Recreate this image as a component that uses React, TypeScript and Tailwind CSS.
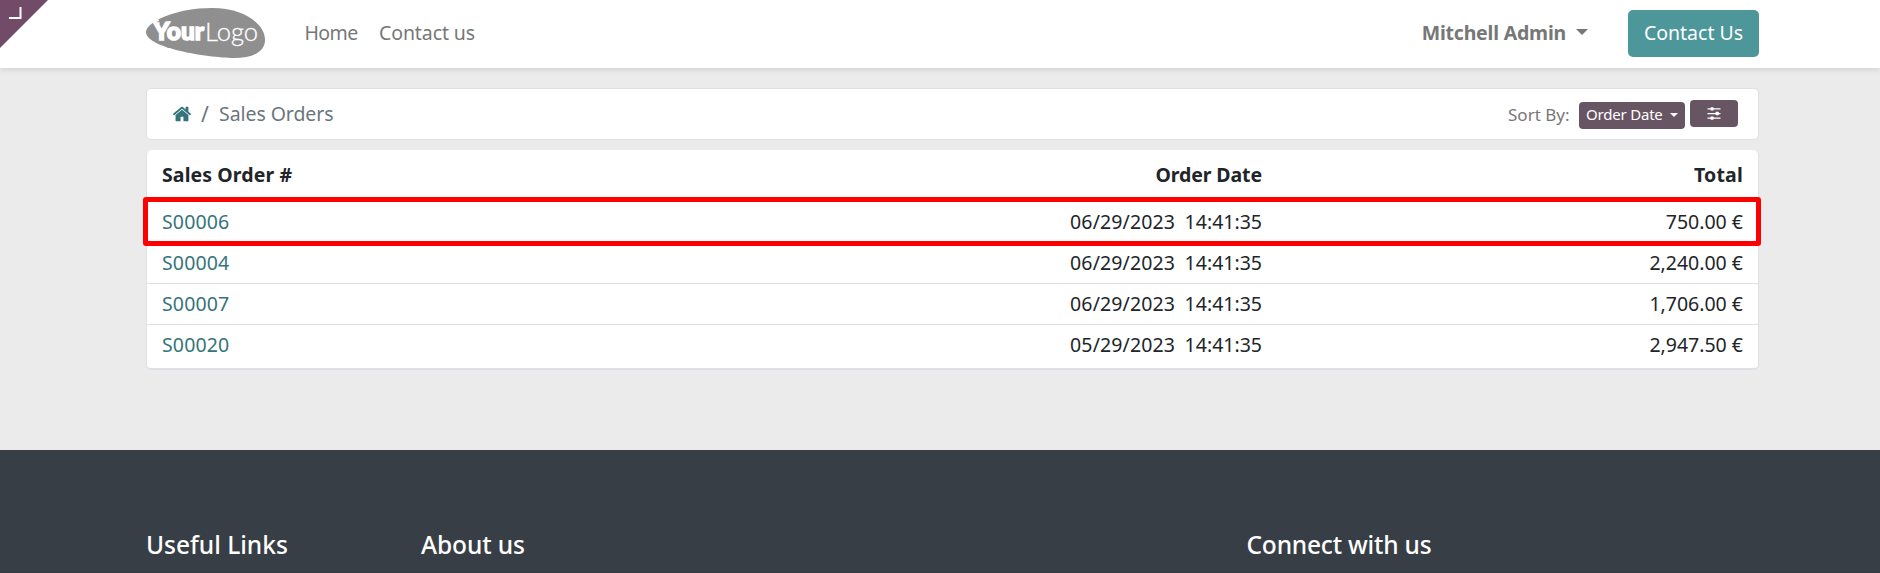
const orders = [
  { id: "S00006", date: "06/29/2023", time: "14:41:35", total: "750.00 €" },
  { id: "S00004", date: "06/29/2023", time: "14:41:35", total: "2,240.00 €" },
  { id: "S00007", date: "06/29/2023", time: "14:41:35", total: "1,706.00 €" },
  { id: "S00020", date: "05/29/2023", time: "14:41:35", total: "2,947.50 €" },
];

function Logo() {
  return (
    <svg width="119" height="50" viewBox="0 0 119 50" className="mt-2 shrink-0" role="img" aria-label="Your Logo">
      <path
        d="M0 24C0 14 30 0 66 0C98 0 119 16 119 32C119 44 106 50 88 50C60 49.500 0 40 0 24Z"
        fill="#8f8f8f"
      />
      <text x="7.500" y="32.300" textLength="50.500" lengthAdjust="spacingAndGlyphs" fill="#fff" stroke="#fff" strokeWidth="1.500" className="font-['Lato',sans-serif] text-[24.5px] font-black">
        Your
      </text>
      <path d="M5 12.700h8M8 15h6" stroke="#fff" strokeWidth="1.200" />
      <text x="59" y="32.800" textLength="53" lengthAdjust="spacingAndGlyphs" fill="#fff" stroke="#fff" strokeWidth="0.300" className="font-['Lato',sans-serif] text-[26px] font-light">
        Logo
      </text>
    </svg>
  );
}

function HomeIcon() {
  return (
    <svg width="20" height="20" viewBox="0 0 1792 1792" fill="currentColor" className="text-[#35747a]">
      <path d="M1472 992v480q0 26-19 45t-45 19h-384v-384h-256v384h-384q-26 0-45-19t-19-45v-480q0-1 .5-3t.5-3l575-474 575 474q1 2 1 6zm223-69l-62 74q-8 9-21 11h-3q-13 0-21-7l-692-577-692 577q-12 8-24 7-13-2-21-11l-62-74q-8-10-7-23.5t11-21.5l719-599q32-26 76-26t76 26l244 204v-195q0-14 9-23t23-9h192q14 0 23 9t9 23v408l219 182q10 8 11 21.500t-7 23.500z" />
    </svg>
  );
}

function SlidersIcon() {
  return (
    <svg width="14" height="13" viewBox="0 0 14 13" fill="currentColor">
      <path d="M0.500 1.300h13v1.300h-13zM0.500 5.900h13v1.300h-13zM0.500 10.500h13v1.300h-13z" />
      <rect x="3.500" y="0.200" width="3.200" height="3.400" rx="0.800" />
      <rect x="8.600" y="4.800" width="3.200" height="3.400" rx="0.800" />
      <rect x="3.500" y="9.400" width="3.200" height="3.400" rx="0.800" />
    </svg>
  );
}

export default function App() {
  return (
    <div className="flex h-[573px] w-full flex-col overflow-hidden bg-[#ebebeb] font-['Noto_Sans','Open_Sans',sans-serif] text-[19.5px] text-[#212529]">
      <header className="relative flex h-[68px] shrink-0 bg-white pl-[146px] shadow-[0_2px_5px_rgba(0,0,0,0.1)]">
        <svg width="48" height="48" viewBox="0 0 48 48" className="absolute top-0 left-0">
          <path d="M0 0H48L0 48Z" fill="#714b67" />
          <path d="M9 17.900H20.500V7" fill="none" stroke="#fff" strokeWidth="2" />
        </svg>
        <div className="flex w-[1613px]">
          <Logo />
          <nav className="flex pl-[39.5px] leading-[66px] text-[#777777]">
            <a className="w-[74.5px] tracking-[-0.6px]">Home</a>
            <a className="tracking-[-0.1px]">Contact us</a>
          </nav>
          <div className="ml-auto flex leading-[66px] text-[#777777]">
            <span className="font-bold tracking-[-0.2px]">Mitchell Admin</span>
            <svg width="12" height="6" viewBox="0 0 12 6" className="mt-[29px] ml-[10px]">
              <path d="M0 0H12L6 6Z" fill="#777777" />
            </svg>
            <button className="mt-[10px] ml-[40px] h-[47px] w-[131px] rounded-[5px] bg-[#4d979b] pb-[1px] text-white leading-[46px]">
              Contact Us
            </button>
          </div>
        </div>
      </header>

      <main className="ml-[146px] w-[1613px] grow">
        <div className="mt-[20px] flex h-[52px] rounded-[5px] border border-[#dee0e5] bg-white pl-[25px] leading-[50px] text-[#6c757d]">
          <div className="pt-[15px]">
            <HomeIcon />
          </div>
          <span className="ml-[9px] w-[18px] text-[21px]">/</span>
          <span className="tracking-[-0.07px]">Sales Orders</span>
          <div className="ml-auto flex pr-[20px]">
            <span className="text-[17px] leading-[51px] text-[#777777]">Sort By:</span>
            <button className="mt-[13px] ml-[9.5px] flex h-[27px] w-[106px] items-center rounded-[4px] bg-[#685563] pb-[2px] pl-[7px] text-[15px] leading-[25px] tracking-[-0.2px] text-white">
              Order Date
              <svg width="8" height="4" viewBox="0 0 8 4" className="mt-[1px] ml-[7px]">
                <path d="M0 0H8L4 4Z" fill="#fff" />
              </svg>
            </button>
            <button className="mt-[11px] ml-[5px] flex h-[27px] w-[48px] items-center justify-center rounded-[4px] bg-[#685563] pb-px text-white">
              <SlidersIcon />
            </button>
          </div>
        </div>

        <div className="relative mt-[10px] h-[220px] rounded-[5px] border-x border-b-2 border-[#dee0e5] bg-white">
          <table className="w-full table-fixed border-separate border-spacing-0">
            <colgroup>
              <col className="w-[500px]" />
              <col className="w-[630px]" />
              <col />
            </colgroup>
            <thead>
              <tr className="h-[52px] text-left align-top leading-[49px]">
                <th className="pl-[15px] font-bold tracking-[0.1px]">Sales Order #</th>
                <th className="pr-[15px] text-right font-bold tracking-[-0.1px]">Order Date</th>
                <th className="pr-[15px] text-right font-bold tracking-[0.2px]">Total</th>
              </tr>
            </thead>
            <tbody className="[&>tr:last-child>td]:border-b-0">
              {orders.map((o) => (
                <tr key={o.id} className="h-[41px] align-top leading-[40px]">
                  <td className="border-b border-[#dee0e5] pl-[15px] tracking-[0.15px] text-[#35747a]">{o.id}</td>
                  <td className="border-b border-[#dee0e5] pr-[15px] text-right">
                    <span className="mr-[9.500px] tracking-[0.13px]">{o.date}</span>
                    <span>{o.time}</span>
                  </td>
                  <td className="border-b border-[#dee0e5] pr-[15px] text-right">{o.total}</td>
                </tr>
              ))}
            </tbody>
          </table>
          <div className="absolute top-[47px] left-[-4px] h-[49px] w-[1618px] rounded-[3px] border-5 border-[#ff0000]" />
        </div>
      </main>

      <footer className="flex h-[123px] shrink-0 border-b border-[#343a40] bg-[#383e45] pt-[73px] pl-[146px] text-[24.5px] leading-[44px] font-medium text-white">
        <h5 className="w-[275px]">Useful Links</h5>
        <h5 className="w-[825.5px] tracking-[-0.1px]">About us</h5>
        <h5 className="tracking-[-0.2px]">Connect with us</h5>
      </footer>
    </div>
  );
}
